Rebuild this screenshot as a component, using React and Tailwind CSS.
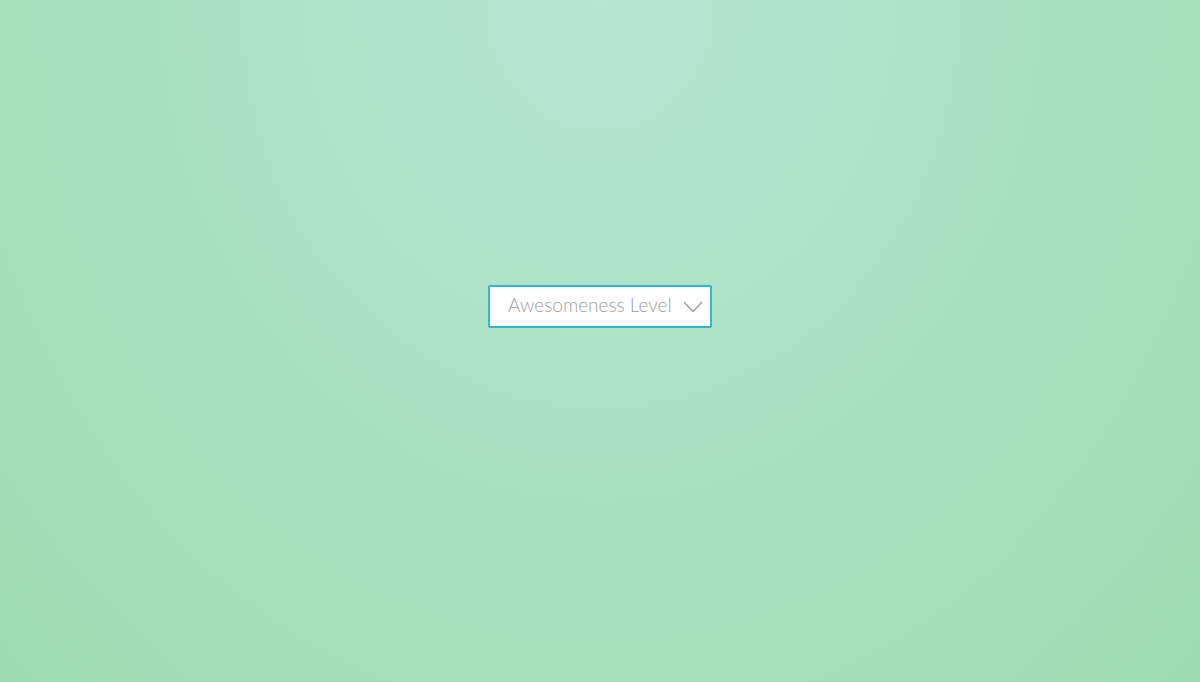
const App = () => {
  return (
    <div className="w-full h-[682px] flex items-center justify-center bg-[radial-gradient(ellipse_at_50%_0%,#b6e5d3_0%,#aee3c8_30%,#a6e0bd_60%,#9edcb0_100%)] font-['Lato',sans-serif]">
      <div className="w-[224px] h-[43px] mt-[-70px] bg-white border-2 border-[#2fb5d6] rounded-[2px] flex items-center pl-[18px] gap-[11px]">
        <span className="text-[19px] font-light text-[#a0a0a0] leading-none mb-[3px]">Awesomeness Level</span>
        <svg width="20" height="12" viewBox="0 0 20 12" className="text-[#999] mt-[2px]">
          <path d="M1 1 L10 10.5 L19 1" fill="none" stroke="currentColor" strokeWidth="1.3" />
        </svg>
      </div>
    </div>
  );
};

export default App;
